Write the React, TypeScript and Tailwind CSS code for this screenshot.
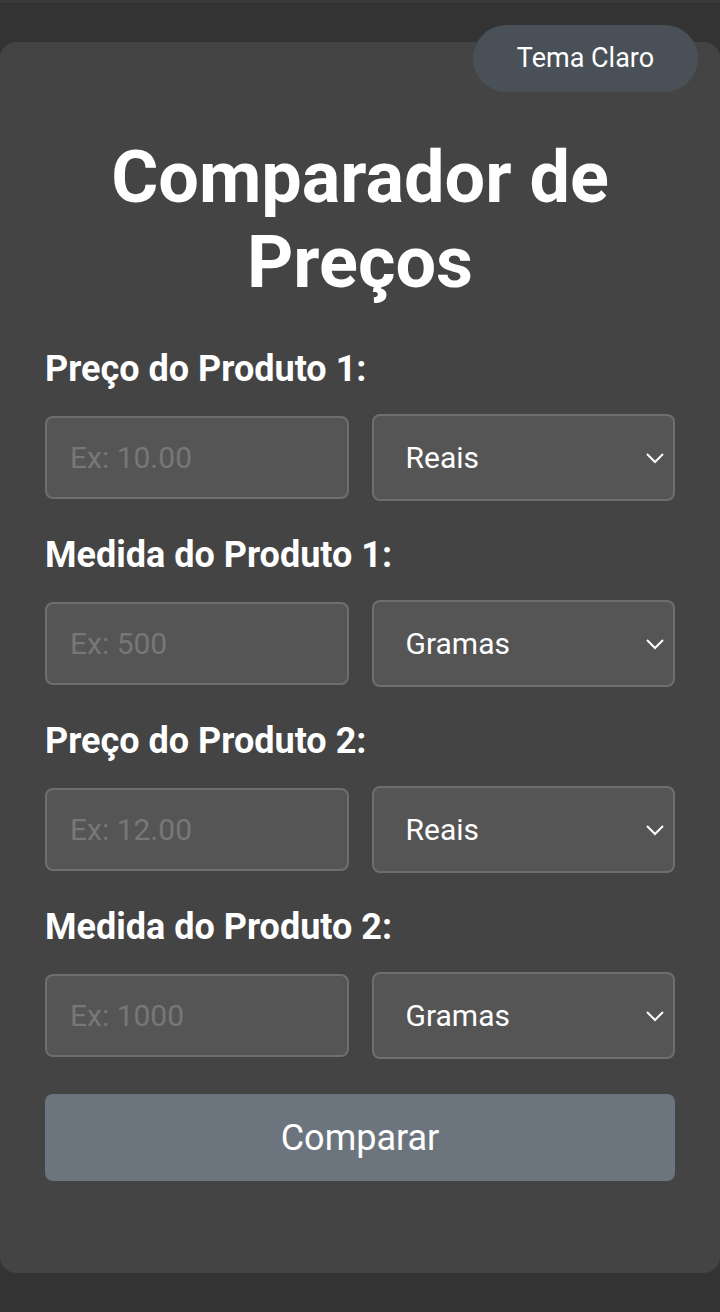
import { ChangeEvent, useState } from "react";

interface Field {
  label: string;
  placeholder: string;
  options: string[];
}

const fields: Field[] = [
  { label: "Preço do Produto 1:", placeholder: "Ex: 10.00", options: ["Reais", "Centavos"] },
  { label: "Medida do Produto 1:", placeholder: "Ex: 500", options: ["Gramas", "Quilos", "Mililitros", "Litros"] },
  { label: "Preço do Produto 2:", placeholder: "Ex: 12.00", options: ["Reais", "Centavos"] },
  { label: "Medida do Produto 2:", placeholder: "Ex: 1000", options: ["Gramas", "Quilos", "Mililitros", "Litros"] },
];

function Chevron() {
  return (
    <svg
      className="pointer-events-none absolute right-[10px] top-1/2 -translate-y-1/2"
      width="20"
      height="12"
      viewBox="0 0 20 12"
      fill="none"
      stroke="white"
      strokeWidth="2"
    >
      <path d="M2 2 L10 10 L18 2" />
    </svg>
  );
}

function Row({ field }: { field: Field }) {
  const [value, setValue] = useState("");
  const [unit, setUnit] = useState(field.options[0]);

  return (
    <div className="flex flex-col">
      <label className="text-[36px] leading-[40px] font-bold text-white mb-[25px]">
        {field.label}
      </label>
      <div className="grid grid-cols-2 gap-[23px] items-center">
        <input
          type="number"
          value={value}
          onChange={(e: ChangeEvent<HTMLInputElement>) => setValue(e.target.value)}
          placeholder={field.placeholder}
          className="h-[83px] w-full rounded-[8px] border-2 border-[#6e6e6e] bg-[#555555] px-[23px] text-[30px] text-white placeholder:text-[#777777] outline-none"
        />
        <div className="relative">
          <select
            value={unit}
            onChange={(e: ChangeEvent<HTMLSelectElement>) => setUnit(e.target.value)}
            className="h-[87px] w-full appearance-none rounded-[8px] border-2 border-[#6e6e6e] bg-[#555555] px-[32px] text-[30px] text-white outline-none"
          >
            {field.options.map((o) => (
              <option key={o}>{o}</option>
            ))}
          </select>
          <Chevron />
        </div>
      </div>
    </div>
  );
}

export default function App() {
  const [dark, setDark] = useState(true);

  return (
    <div
      className="relative min-h-[1312px] bg-[#333333] pt-[42px] pb-[40px] border-t-[3px] border-b-2 border-t-[#3a3a3a] border-b-black"
      style={{ fontFamily: "Roboto, 'Noto Sans', sans-serif" }}
    >
      <button
        onClick={() => setDark(!dark)}
        className="absolute right-[22px] top-[22px] z-10 h-[67px] w-[225px] rounded-full bg-[#495057] text-[27px] text-white"
      >
        {dark ? "Tema Claro" : "Tema Escuro"}
      </button>

      <main className="rounded-[16px] bg-[#444444] px-[45px] pt-[93px] pb-[92px] -mt-[3px]">
        <h1 className="text-center text-[72px] leading-[85px] font-bold text-white mb-[44px]">
          Comparador de Preços
        </h1>

        <div className="flex flex-col gap-[34px]">
          {fields.map((f) => (
            <Row key={f.label} field={f} />
          ))}
        </div>

        <button className="mt-[35px] h-[87px] w-full rounded-[8px] bg-[#6c757d] text-[36px] text-white">
          Comparar
        </button>
      </main>
    </div>
  );
}
